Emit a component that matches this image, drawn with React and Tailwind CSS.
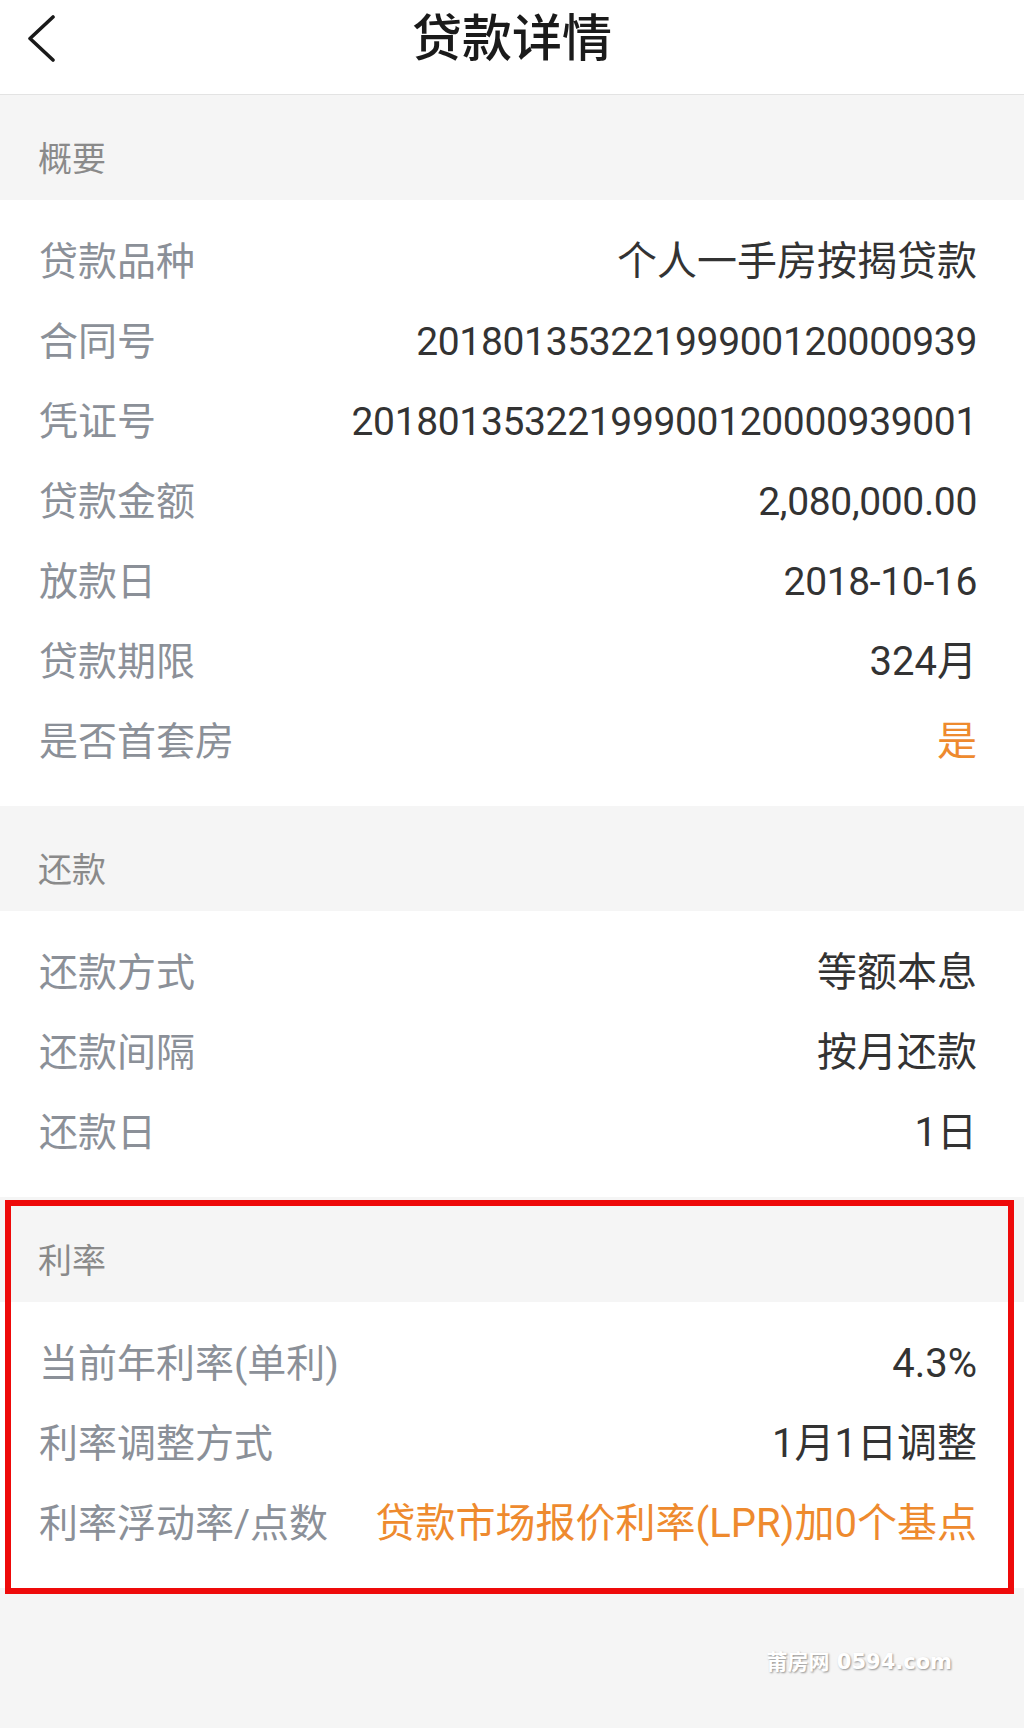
import React from 'react';

const font = { fontFamily: 'Roboto, "Noto Sans CJK SC", sans-serif' };

const sections = [
  {
    title: '概要',
    rows: [
      ['贷款品种', '个人一手房按揭贷款'],
      ['合同号', '20180135322199900120000939'],
      ['凭证号', '20180135322199900120000939001'],
      ['贷款金额', '2,080,000.00'],
      ['放款日', '2018-10-16'],
      ['贷款期限', '324月'],
      ['是否首套房', '是', true],
    ],
  },
  {
    title: '还款',
    rows: [
      ['还款方式', '等额本息'],
      ['还款间隔', '按月还款'],
      ['还款日', '1日'],
    ],
  },
];

const rateRows = [
  ['当前年利率(单利)', '4.3%'],
  ['利率调整方式', '1月1日调整'],
  ['利率浮动率/点数', '贷款市场报价利率(LPR)加0个基点', true],
];

const isNumber = (v) => /^[\d,.\-]+$/.test(v);

const SectionHeader = ({ title }) => (
  <div className="h-[105px] bg-[#f5f5f5] pl-[38px] pt-[47px] text-[34px] leading-[34px] text-[#8a8a8a]">
    {title}
  </div>
);

const Rows = ({ rows }) => (
  <div className="bg-white pt-[22px] pb-[24px]">
    {rows.map(([label, value, orange]) => (
      <div key={label} className="flex h-[80px] items-center justify-between pl-[39px] pr-[47px] leading-[44px]">
        <span className="whitespace-nowrap text-[39px] text-[#8b9098]">{label}</span>
        <span
          className={
            (orange ? 'text-[#ee8a2e] ' : 'text-[#333333] ') +
            (isNumber(value) ? 'whitespace-nowrap text-[39px] tracking-[-0.35px]' : 'whitespace-nowrap text-[40px]')
          }
        >
          {value}
        </span>
      </div>
    ))}
  </div>
);

export default function App() {
  return (
    <div className="flex min-h-[1728px] flex-col bg-[#f5f5f5]" style={font}>
      {/* Title bar */}
      <div className="h-[95px] border-b border-[#e3e3e3] bg-white">
        <div className="grid h-[77px] grid-cols-[1fr_auto_1fr] items-center">
          <div className="pl-[27px]">
            <svg width="30" height="48" viewBox="0 0 30 48" fill="none">
              <path d="M26 2 L3 23.5 L26 45" stroke="#1a1a1a" strokeWidth="3.6" strokeLinecap="round" strokeLinejoin="round" />
            </svg>
          </div>
          <div className="text-[50px] font-medium leading-[56px] text-[#1a1a1a]">贷款详情</div>
          <div />
        </div>
      </div>

      {sections.map((s) => (
        <div key={s.title}>
          <SectionHeader title={s.title} />
          <Rows rows={s.rows} />
        </div>
      ))}

      {/* Rate section, highlighted */}
      <div className="relative">
        <SectionHeader title="利率" />
        <Rows rows={rateRows} />
        <div className="pointer-events-none absolute left-[5px] right-[10px] top-[3px] bottom-[-6px] border-[6px] border-[#ee0a0a]" />
      </div>

      {/* Footer with watermark */}
      <div className="flex flex-1 justify-end pr-[72px] pt-[61px]">
        <span
          className="text-[21px] font-bold leading-[26px] text-white [text-shadow:1px_1px_2px_rgba(0,0,0,0.4)]"
          style={{ fontFamily: '"DejaVu Sans", "Noto Sans CJK SC", sans-serif' }}
        >
          莆房网 0594.com
        </span>
      </div>
    </div>
  );
}
